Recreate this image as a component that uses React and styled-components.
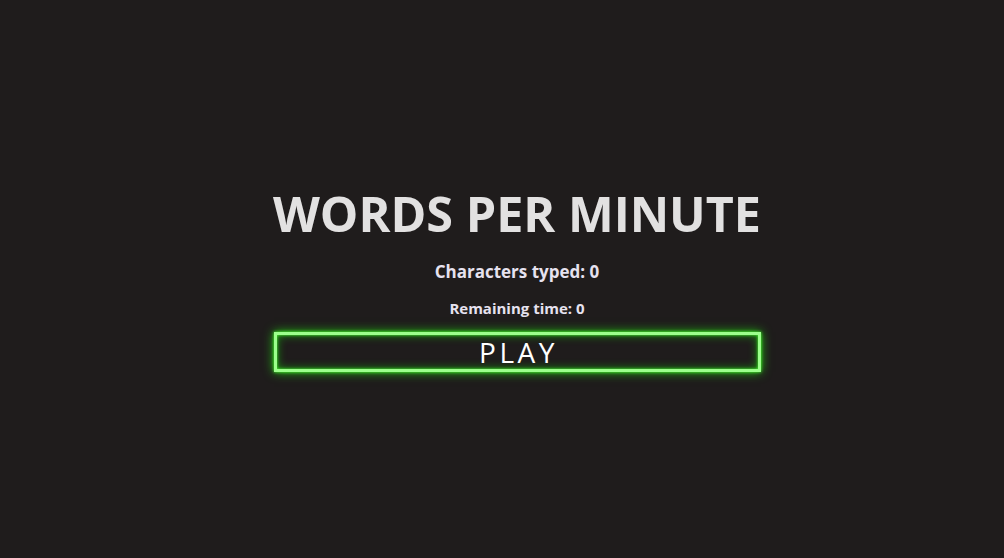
import React from 'react'
import styled, { createGlobalStyle } from 'styled-components'

const GlobalStyle = createGlobalStyle`
  html, body {
    margin: 0;
    padding: 0;
    background-color: #1f1c1c;
  }
`

const Page = styled.div`
  height: 100vh;
  display: flex;
  flex-direction: column;
  align-items: center;
  justify-content: center;
  padding: 0 0 4px 30px;
  box-sizing: border-box;
  font-family: "Open Sans", "Noto Sans", sans-serif;
`

const Title = styled.h1`
  margin: 0 0 17px;
  font-size: 48.5px;
  font-weight: 700;
  color: #e2e1e1;
  line-height: 62px;
`

const Stat = styled.p`
  margin: ${(p) => (p.$small ? '14px 0 13px' : '0')};
  font-size: ${(p) => (p.$small ? '15px' : '17px')};
  font-weight: 700;
  color: #e6e2ef;
  line-height: 22px;
`

const PlayButton = styled.button`
  width: 487px;
  height: 40px;
  box-sizing: border-box;
  background: transparent;
  border: 3px solid #9cff8c;
  box-shadow: 0 0 3px #4dff33, 0 0 10px #22cc11, inset 0 0 3px #4dff33,
    inset 0 0 10px #1a9a10;
  color: #ffffff;
  font-family: "Open Sans", "Noto Sans", sans-serif;
  font-size: 28px;
  font-weight: 400;
  letter-spacing: 3.5px;
  line-height: 34px;
  padding: 0 0 0 3px;
  cursor: pointer;
`

export default function App() {
  return (
    <>
      <GlobalStyle />
      <Page>
        <Title>WORDS PER MINUTE</Title>
        <Stat>Characters typed: 0</Stat>
        <Stat $small>Remaining time: 0</Stat>
        <PlayButton>PLAY</PlayButton>
      </Page>
    </>
  )
}
